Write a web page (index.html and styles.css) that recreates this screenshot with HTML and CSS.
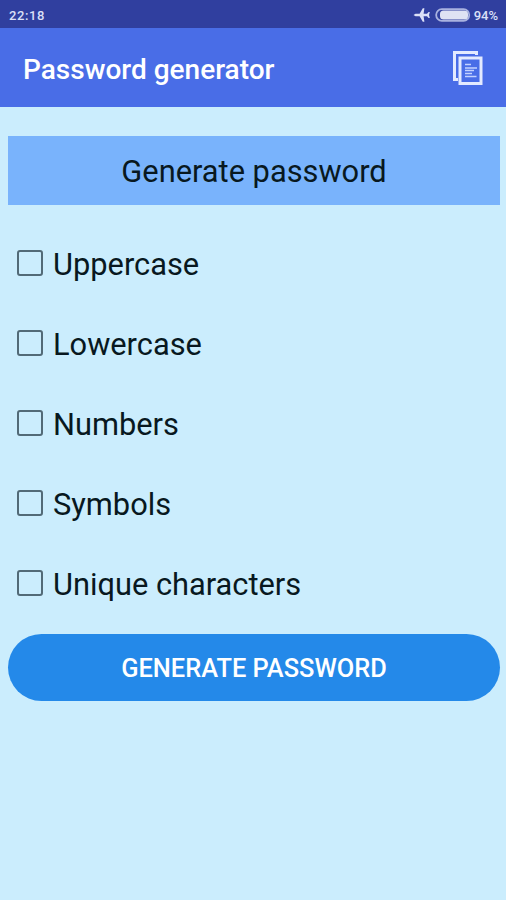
FILE: index.html
```html
<!DOCTYPE html>
<html lang="en">
<head>
<meta charset="utf-8">
<title>Password generator</title>
<link rel="stylesheet" href="styles.css">
</head>
<body>
<div class="status">
  <span class="time">22:18</span>
  <svg class="plane" width="18" height="16" viewBox="0 0 18 16"><path d="M.5 8 L2.5 6.8 H6.6 L9.8 1.2 H11.4 L10.6 6.8 H14 L15.6 5 H16.8 L16 8 L16.8 11 H15.6 L14 9.2 H10.6 L11.4 14.8 H9.8 L6.6 9.2 H2.5 Z"/></svg>
  <svg class="battery" width="36" height="14" viewBox="0 0 36 14"><rect class="shell" x="1.2" y="1.2" width="33" height="11.6" rx="5.6"/><rect class="charge" x="5" y="2.4" width="28" height="9.2" rx="3.6"/></svg>
  <span class="percent">94%</span>
</div>
<header class="appbar">
  <h1>Password generator</h1>
  <svg class="copy" width="32" height="38" viewBox="0 0 32 38"><path class="sheet" d="M24.5 5V2.5H2.5V29.5H6"/><rect class="sheet" x="8" y="8" width="21" height="25.5"/><path class="lines" d="M13 14.5H19M13 18H25M13 20.5H22M13 23.5H20M13 26.5H24.5"/></svg>
</header>
<main>
  <h2>Generate password</h2>
  <div class="options">
    <label><input type="checkbox"><span>Uppercase</span></label>
    <label><input type="checkbox"><span>Lowercase</span></label>
    <label><input type="checkbox"><span>Numbers</span></label>
    <label><input type="checkbox"><span>Symbols</span></label>
    <label><input type="checkbox"><span>Unique characters</span></label>
  </div>
  <button type="button">GENERATE PASSWORD</button>
</main>
</body>
</html>
```
FILE: styles.css
```css
* { box-sizing: border-box; }
body {
  margin: 0;
  min-height: 900px;
  background: #cbedfd;
  color: #081820;
  font-family: Roboto, "Liberation Sans", sans-serif;
}
.status {
  display: flex;
  align-items: center;
  height: 28px;
  padding: 2px 8px 0 9px;
  background: #303f9f;
  color: #dbe0f7;
  font-size: 13px;
  font-weight: 500;
}
.time { margin-right: auto; letter-spacing: 0.6px; }
.plane { fill: #dbe0f7; margin-right: 4px; }
.battery { margin-right: 3px; }
.shell { fill: none; stroke: #a9b2e0; stroke-width: 1.8; }
.charge { fill: #dfe2f3; }
.appbar {
  display: flex;
  align-items: center;
  justify-content: space-between;
  height: 79px;
  padding: 2px 22px 0 23px;
  background: #496de7;
  color: #fff;
}
h1 { margin: 0; padding-top: 1px; font-size: 28px; font-weight: 500; }
.sheet { fill: none; stroke: #e3eaff; stroke-width: 3; }
.lines { fill: none; stroke: #c4d2ff; stroke-width: 1.5; }
main { padding: 29px 6px 0 8px; }
h2 {
  margin: 0 0 18px;
  height: 69px;
  background: #79b3fc;
  font-size: 30.8px;
  font-weight: 400;
  line-height: 72px;
  text-align: center;
}
.options label {
  display: flex;
  align-items: center;
  gap: 10px;
  height: 80px;
  padding-left: 9px;
  font-size: 30.8px;
}
.options span { padding-top: 2px; }
.options input {
  appearance: none;
  width: 26px;
  height: 26px;
  margin: 0;
  border: 2px solid #526a77;
  border-radius: 3px;
}
button {
  display: block;
  width: 100%;
  height: 67px;
  margin-top: 11px;
  padding: 1px 0 0;
  border: 0;
  border-radius: 34px;
  background: #2489e9;
  color: #fff;
  font: 500 25.4px Roboto, "Liberation Sans", sans-serif;
}
```
